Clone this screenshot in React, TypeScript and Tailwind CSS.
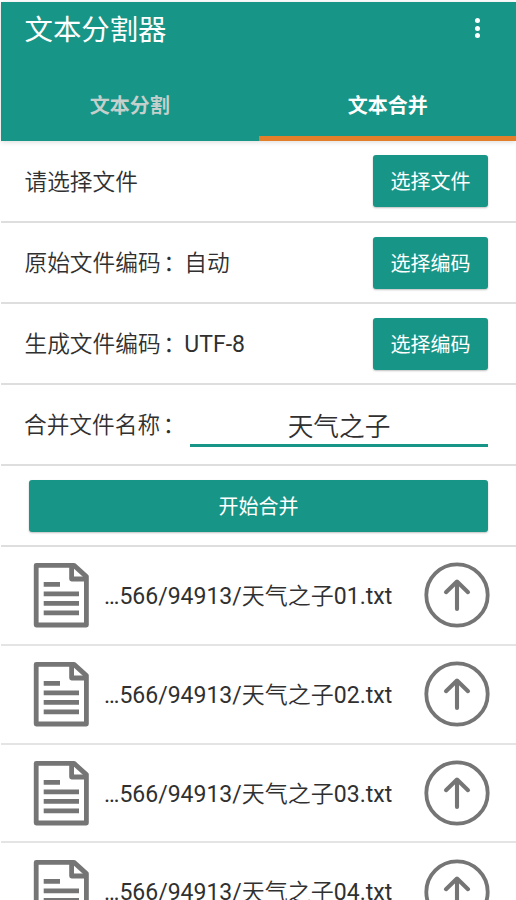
import React from 'react';

const files = ['01', '02', '03', '04'];

const settings = [
  { label: '请选择文件', value: '', weight: 'font-[350]', action: '选择文件', height: 'h-[82px]' },
  { label: '原始文件编码', value: '自动', weight: 'font-[350]', action: '选择编码', height: 'h-[81px]' },
  { label: '生成文件编码', value: 'UTF-8', weight: 'font-normal text-[23px]', action: '选择编码', height: 'h-[81px]' },
];

const Colon = () => <span className="-mr-[1.5px] pl-[2.5px]">：</span>;

const FileIcon = () => (
  <svg width="56" height="66" viewBox="0 0 56 66" fill="none" className="shrink-0">
    <path d="M3.2 3.4H41L53.4 14.6V63H3.2Z" stroke="#757575" strokeWidth="4.8" strokeLinejoin="round" />
    <path d="M38.6 4V17H53" stroke="#757575" strokeWidth="4.8" strokeLinejoin="round" />
    <path d="M10.7 22.3H27M10.7 31.8H46M10.7 41.3H46M10.7 50.8H46" stroke="#757575" strokeWidth="4.8" />
  </svg>
);

const UpIcon = () => (
  <svg width="66" height="66" viewBox="0 0 66 66" fill="none" className="shrink-0">
    <circle cx="33" cy="33" r="30.7" stroke="#757575" strokeWidth="3.8" />
    <path d="M33 47V20M22 30.2L33 19.6L44 30.2" stroke="#757575" strokeWidth="4.1" strokeLinecap="round" strokeLinejoin="round" />
  </svg>
);

const App = () => {
  return (
    <div className="h-[900px] w-[516px] overflow-hidden bg-white pl-px pt-0.5 font-[Roboto,'Noto_Sans_CJK_SC',sans-serif] text-[#303030]">
      {/* Header */}
      <header className="flex h-[139px] flex-col bg-[#179587] text-white shadow-[0_1px_5px_rgba(0,0,0,0.15)]">
        <div className="flex h-[52px] items-center justify-between pl-[23.5px] pr-9">
          <h1 className="pt-[6px] text-[28.4px] leading-none">文本分割器</h1>
          <div className="flex flex-col gap-[2.5px]">
            <span className="size-[5px] rounded-full bg-white" />
            <span className="size-[5px] rounded-full bg-white" />
            <span className="size-[5px] rounded-full bg-white" />
          </div>
        </div>
        <nav className="grid flex-1 grid-cols-2 text-[20px] font-bold">
          <button className="pt-[17px] text-[#c5cfcc]">文本分割</button>
          <button className="border-b-[5px] border-[#e37f2b] pl-px pt-[22px]">文本合并</button>
        </nav>
      </header>

      {/* Settings */}
      {settings.map((row) => (
        <div key={row.label} className={`flex items-center justify-between border-b-2 border-[#dedede] pl-[23.5px] pr-7 ${row.height}`}>
          <span className="pt-1 text-[22.7px] font-[350]">
            {row.label}
            {row.value && <Colon />}
            <span className={row.weight}>{row.value}</span>
          </span>
          <button className="h-[52px] w-[115px] rounded-[3px] bg-[#179587] pt-0.5 text-[20px] text-white shadow-[0_1px_2px_rgba(0,0,0,0.25)]">
            {row.action}
          </button>
        </div>
      ))}
      <div className="flex h-[81px] items-center border-b-2 border-[#dedede] pl-[23px] pr-7">
        <span className="w-[166px] shrink-0 pt-1 text-[22.7px] font-[350]">
          合并文件名称
          <Colon />
        </span>
        <input
          className="h-[44px] min-w-0 flex-1 border-b-[3px] border-[#179587] pt-0.5 text-center text-[25.7px] font-[350] outline-none"
          defaultValue="天气之子"
        />
      </div>
      <div className="flex h-[81px] items-center border-b-2 border-[#dedede] pl-7 pr-7">
        <button className="h-[52px] w-full rounded-[3px] bg-[#179587] pt-0.5 text-[20px] text-white shadow-[0_1px_2px_rgba(0,0,0,0.25)]">
          开始合并
        </button>
      </div>

      {/* Files */}
      <ul>
        {files.map((n) => (
          <li key={n} className="flex h-[98.75px] items-center border-b-2 border-[#e4e4e4] pl-8 pr-[26px]">
            <FileIcon />
            <span className="ml-[15px] flex-1 whitespace-nowrap pt-1 text-[23px]">
              …566/94913/<span className="font-[350]">天气之子</span>{n}.txt
            </span>
            <UpIcon />
          </li>
        ))}
      </ul>
    </div>
  );
};

export default App;
